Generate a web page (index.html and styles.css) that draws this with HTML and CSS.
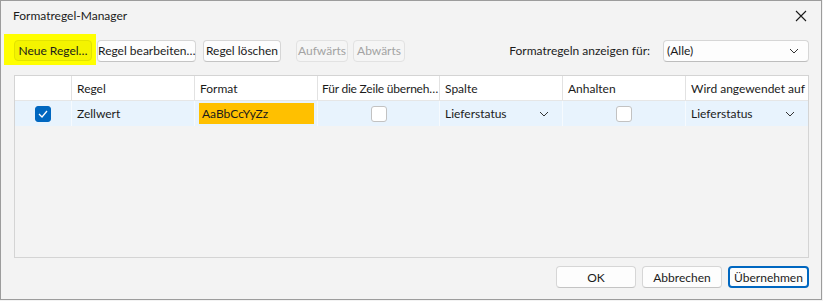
FILE: index.html
```html
<!DOCTYPE html>
<html lang="de">
<head>
    <meta charset="UTF-8">
    <title>Formatregel-Manager</title>
    <link rel="stylesheet" href="styles.css">
</head>
<body>
    <div class="dialog">
        <div class="titlebar">
            <span class="title">Formatregel-Manager</span>
            <svg class="close" width="12" height="12" viewBox="0 0 12 12">
                <path d="M1 1 L11 11 M11 1 L1 11" stroke="#1a1a1a" stroke-width="1.1" fill="none"/>
            </svg>
        </div>

        <div class="toolbar">
            <div class="highlight">
                <button class="btn btn-yellow">Neue Regel…</button>
            </div>
            <button class="btn btn-edit">Regel bearbeiten…</button>
            <button class="btn btn-delete">Regel löschen</button>
            <button class="btn btn-move btn-up" disabled>Aufwärts</button>
            <button class="btn btn-move btn-down" disabled>Abwärts</button>
            <span class="show-label">Formatregeln anzeigen für:</span>
            <div class="select select-show">
                <span>(Alle)</span>
                <svg width="10" height="6" viewBox="0 0 10 6"><path d="M1 1 L5 5 L9 1" stroke="#333" stroke-width="1" fill="none"/></svg>
            </div>
        </div>

        <div class="table">
            <div class="row head">
                <div class="cell"></div>
                <div class="cell">Regel</div>
                <div class="cell">Format</div>
                <div class="cell tight">Für die Zeile überneh…</div>
                <div class="cell">Spalte</div>
                <div class="cell">Anhalten</div>
                <div class="cell">Wird angewendet auf</div>
            </div>
            <div class="row data">
                <div class="cell center">
                    <span class="check checked">
                        <svg width="10" height="8" viewBox="0 0 10 8"><path d="M1 4 L4 7 L9 1" stroke="#fff" stroke-width="1.3" fill="none"/></svg>
                    </span>
                </div>
                <div class="cell">Zellwert</div>
                <div class="cell format-cell"><span class="sample">AaBbCcYyZz</span></div>
                <div class="cell center"><span class="check"></span></div>
                <div class="cell combo">
                    <span>Lieferstatus</span>
                    <svg width="10" height="6" viewBox="0 0 10 6"><path d="M1 1 L5 5 L9 1" stroke="#333" stroke-width="1" fill="none"/></svg>
                </div>
                <div class="cell center"><span class="check"></span></div>
                <div class="cell combo">
                    <span>Lieferstatus</span>
                    <svg width="10" height="6" viewBox="0 0 10 6"><path d="M1 1 L5 5 L9 1" stroke="#333" stroke-width="1" fill="none"/></svg>
                </div>
            </div>
        </div>

        <div class="footer">
            <button class="btn btn-foot">OK</button>
            <button class="btn btn-foot">Abbrechen</button>
            <button class="btn btn-foot btn-default">Übernehmen</button>
        </div>
    </div>
</body>
</html>
```

FILE: styles.css
```css
body {
    margin: 0;
    font-family: Lato, "Noto Sans", sans-serif;
    font-size: 12px;
    color: #1b1b1b;
    background-color: #f3f3f3;
}

.dialog {
    width: 822px;
    height: 300px;
    box-sizing: border-box;
    border: 1px solid #9c9c9c;
    background-color: #f3f3f3;
    display: flex;
    flex-direction: column;
}

.titlebar {
    height: 32px;
    display: flex;
    align-items: center;
    justify-content: space-between;
    padding: 0 14px 0 12px;
    box-sizing: border-box;
}

.title {
    margin-top: -4px;
}

.close {
    margin-top: -2px;
}

.toolbar {
    display: flex;
    align-items: center;
    padding: 0 0 0 3px;
    height: 32px;
}

.highlight {
    background-color: #ffff00;
    padding: 6px 4px 4px 10px;
    height: 31px;
    box-sizing: border-box;
    margin-right: 1px;
}

.btn {
    font-family: inherit;
    font-size: 12px;
    color: #1b1b1b;
    height: 22px;
    padding: 0;
    white-space: nowrap;
    background-color: #fdfdfd;
    border: 1px solid #d6d6d6;
    border-bottom-color: #c4c4c4;
    border-radius: 4px;
    box-sizing: border-box;
}

.btn-yellow {
    width: 78px;
    height: 21px;
    background-color: #f4f400;
    border-color: #e3e300;
}

.btn-edit {
    width: 99px;
    margin-top: 3px;
}

.btn-delete {
    width: 78px;
    margin-left: 7px;
    margin-top: 3px;
}

.btn-move {
    width: 52px;
    margin-top: 3px;
    color: #a3a3a3;
    background-color: #f5f5f5;
    border-color: #e2e2e2;
}

.btn-up {
    margin-left: 15px;
}

.btn-down {
    margin-left: 5px;
}

.show-label {
    margin-left: auto;
    margin-top: 3px;
    margin-right: 13px;
}

.select {
    display: flex;
    align-items: center;
    justify-content: space-between;
    background-color: #fdfdfd;
    border: 1px solid #d6d6d6;
    border-bottom-color: #bdbdbd;
    border-radius: 4px;
    box-sizing: border-box;
}

.select-show {
    width: 146px;
    height: 22px;
    margin-top: 3px;
    margin-right: 12px;
    padding: 0 9px 0 3px;
}

.table {
    margin: 10px 12px 0 13px;
    height: 183px;
    box-sizing: border-box;
    border: 1px solid #d4d4d4;
    background-color: #f3f3f3;
}

.row {
    display: grid;
    grid-template-columns: 56px 123px 123px 122px 123px 123px 1fr;
}

.head {
    height: 24px;
    background-color: #ffffff;
    border-bottom: 1px solid #e6e6e6;
}

.head .cell {
    border-left: 1px solid #e2e2e2;
}

.head .cell:first-child {
    border-left: none;
}

.data {
    height: 25px;
    background-color: #e8f3fd;
}

.data .cell {
    border-left: 1px solid #f6fafe;
}

.data .cell:first-child {
    border-left: none;
}

.cell {
    display: flex;
    align-items: center;
    padding: 0 5px;
    white-space: nowrap;
    overflow: hidden;
    min-width: 0;
}

.tight {
    padding: 0 0 0 4px;
    letter-spacing: -0.2px;
}

.center {
    justify-content: center;
}

.format-cell {
    padding: 0 3px 0 4px;
}

.sample {
    background-color: #ffc000;
    height: 21px;
    width: 100%;
    display: flex;
    align-items: center;
    padding-left: 3px;
    box-sizing: border-box;
}

.check {
    width: 16px;
    height: 16px;
    box-sizing: border-box;
    border: 1px solid #c2c2c2;
    border-radius: 3px;
    background-color: #ffffff;
    display: flex;
    align-items: center;
    justify-content: center;
}

.check.checked {
    background-color: #0067c0;
    border-color: #0067c0;
}

.combo {
    justify-content: space-between;
    padding-right: 13px;
}

.footer {
    display: flex;
    justify-content: flex-end;
    gap: 6px;
    padding: 8px 12px 0 0;
}

.btn-foot {
    width: 80px;
    height: 22px;
}

.btn-default {
    width: 81px;
    border: 2px solid #0067c0;
    border-radius: 4px;
}
```
